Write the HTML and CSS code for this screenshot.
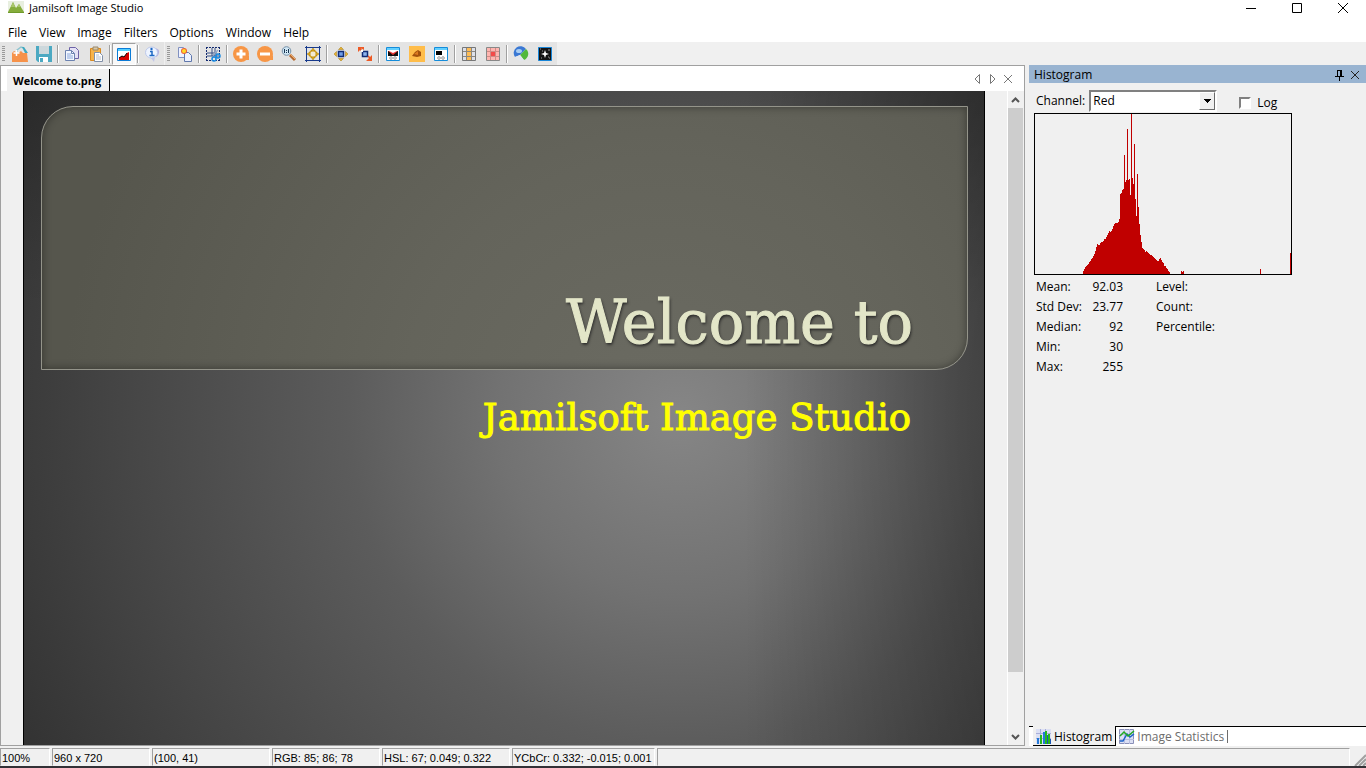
FILE: index.html
```html
<!DOCTYPE html>
<html lang="en">
<head>
<meta charset="utf-8">
<title>Jamilsoft Image Studio</title>
<link rel="stylesheet" href="styles.css">
</head>
<body>
<div class="app">
  <header class="titlebar">
    <svg class="logo" width="16" height="16" viewBox="0 0 16 16"><path d="M0 1h16v12H0z" fill="#e8efe0"/><path d="M0 12 5 2l3 6 3-4 5 8z" fill="#86ad3c"/><path d="M3 7l2-5 2 5zM9 7l2-3 2 3z" fill="#a9c76b"/><path d="M0 12h16v1H0z" fill="#6f9a2c"/></svg>
    <h1 class="app-name">Jamilsoft Image Studio</h1>
    <div class="window-buttons">
      <button aria-label="Minimize"><svg width="12" height="12"><path d="M1 7.500h10" stroke="#000"/></svg></button>
      <button aria-label="Maximize"><svg width="12" height="12"><path d="M1.500 2.500h9v9h-9z" fill="none" stroke="#000"/></svg></button>
      <button aria-label="Close"><svg width="12" height="12"><path d="M1 2l10 10M11 2 1 12" stroke="#000"/></svg></button>
    </div>
  </header>

  <nav class="menubar">
    <button>File</button><button>View</button><button>Image</button><button>Filters</button><button>Options</button><button>Window</button><button>Help</button>
  </nav>

  <div class="toolbars">
    <div class="toolbar">
      <span class="grip"></span>
      <button aria-label="Open"><svg width="16" height="16"><path d="M5 6V4l4-3 3 1" fill="none" stroke="#8cc4d0" stroke-width="1.500"/><path d="M10 1h2l4 6h-3z" fill="#3fa9c0"/><path d="M0 7l2-2 4 2 3-2 2 2h4l1 9H0z" fill="#f6924a"/><path d="M4.500 4v6M1.500 7h6" stroke="#fff" stroke-width="1.500"/></svg></button>
      <button aria-label="Save"><svg width="16" height="16"><path d="M0 0h16v16H2l-2-2z" fill="#4ca9c2"/><path d="M3 0h10v8H3z" fill="#cdd8dc"/><path d="M3 11h9v5H3z" fill="#fff"/><path d="M4 12h3v4H4z" fill="#4ca9c2"/></svg></button>
      <span class="sep"></span>
      <button aria-label="Copy"><svg width="16" height="16"><path d="M5.500 1.500h6l3 3v8h-9z" fill="#e4e1f5" stroke="#6d63a8"/><path d="M1.500 4.500h6l3 3v7h-9z" fill="#f3f7ff" stroke="#6c82b0"/><path d="M3 8h4M3 10h6M3 12h6" stroke="#8ba8dc"/><path d="M7.500 4.500v3h3" fill="none" stroke="#6c82b0"/></svg></button>
      <button aria-label="Paste"><svg width="16" height="16"><path d="M2.500 2.500h10v12h-10z" fill="#f7b34a" stroke="#d98a20"/><path d="M5 1h5v3H5z" fill="#d9c9a8" stroke="#98876a"/><path d="M6.500 6.500h5l3 3v6h-8z" fill="#fff" stroke="#8190a8"/><path d="M8 9h3M8 11h5M8 13h5" stroke="#b5bdcc"/></svg></button>
      <span class="sep"></span>
      <button class="pressed" aria-label="Histogram" aria-pressed="true"><svg width="16" height="16"><path d="M1.500 2.500h13v12h-13z" fill="#fff" stroke="#0c7bd6"/><path d="M2 3h12v2H2z" fill="#55cfff"/><path d="M3 14v-2l3-2 2 1 3-4 2-1v8z" fill="#d80000"/><path d="M3 12l3-2 2 1 3-4" fill="none" stroke="#000"/></svg></button>
      <span class="sep"></span>
      <button aria-label="Information"><svg width="16" height="16"><path d="M11 2q5 1 4 5t-4 4z" fill="#b7b3e0"/><path d="M7 12l3 4 1-5" fill="#c2c7e8"/><ellipse cx="7.500" cy="6.500" rx="6" ry="5.500" fill="#eef4ff" stroke="#bcc8ea"/><path d="M6 5.500h2v4M5.500 9.500h5" fill="none" stroke="#1d68c4" stroke-width="1.500"/><circle cx="7.500" cy="3" r="1.200" fill="#1d68c4"/></svg></button>
    </div>
    <div class="toolbar">
      <span class="grip"></span>
      <button aria-label="Clone"><svg width="16" height="16"><path d="M1.500 1.500h5l3 3v7h-8z" fill="#eef2ff" stroke="#8090c0"/><path d="M7.500 6.500h4l3 3v6h-7z" fill="#eef2ff" stroke="#6078ac"/><circle cx="7" cy="5" r="3" fill="#ee6038"/><circle cx="7" cy="5" r="2" fill="#ffdb28"/></svg></button>
      <span class="sep"></span>
      <button aria-label="Crop"><svg width="16" height="16"><path d="M1 1.500h14M1.500 1v14M1 14.500h14M14.500 1v14" stroke="#132b70" stroke-dasharray="2 1"/><path d="M7 2v8M10 2v8M2 7h10M2 10h12" stroke="#344e86"/><path d="M8 9l5-5" stroke="#97aac5" stroke-width="1.500"/><circle cx="9" cy="13" r="2" fill="none" stroke="#1689e0" stroke-width="1.500"/><circle cx="13" cy="10" r="2" fill="none" stroke="#1689e0" stroke-width="1.500"/></svg></button>
      <span class="sep"></span>
      <button aria-label="Zoom in"><svg width="16" height="16"><circle cx="8" cy="8" r="8" fill="#f79646"/><path d="M11 14h5v-5z" fill="#f79646"/><path d="M8 3.500v9M3.500 8h9" stroke="#fff" stroke-width="3"/></svg></button>
      <button aria-label="Zoom out"><svg width="16" height="16"><circle cx="8" cy="8" r="8" fill="#f79646"/><path d="M11 14h5v-5z" fill="#f79646"/><path d="M3 8h10" stroke="#fff" stroke-width="3"/></svg></button>
      <button aria-label="Actual size"><svg width="16" height="16"><path d="M9 9l5 5" stroke="#b56a32" stroke-width="3"/><path d="M9 8l5 5" stroke="#f0b070"/><circle cx="5.500" cy="5" r="4.300" fill="#cfe6f4" stroke="#7590a8"/><path d="M3.500 3v4M7.500 3v4" stroke="#163450"/><path d="M5 4h1v1H5zM5 6h1v1H5z" fill="#163450"/></svg></button>
      <button aria-label="Fit to window"><svg width="16" height="16"><path d="M1.500 0v16M14.500 0v16M0 1.500h16M0 14.500h16" stroke="#173a8c"/><circle cx="8" cy="8" r="3.500" fill="#f4ead0" stroke="#d9a21a" stroke-width="1.500"/><path d="M8 2l2 3H6zM8 14l2-3H6zM2 8l3-2v4zM14 8l-3-2v4z" fill="#e5ac16" stroke="#9c7812" stroke-width=".5"/></svg></button>
      <span class="sep"></span>
      <button aria-label="Move"><svg width="16" height="16"><path d="M5.500 5.500h5v5h-5z" fill="#6f9ee8" stroke="#102d78" stroke-width="1.500"/><path d="M8 1l2.500 2.500h-5zM8 15l2.500-2.500h-5zM1 8l2.500-2.500v5zM15 8l-2.500-2.500v5z" fill="#e9b22b" stroke="#a27a18" stroke-width=".5"/></svg></button>
      <button aria-label="Resize"><svg width="16" height="16"><path d="M5.500 5.500h5v5h-5z" fill="#8eb5ed" stroke="#102d78" stroke-width="1.500"/><path d="M2 2l3 3M11 10l3 3" stroke="#e94f1e" stroke-width="1.500"/><path d="M1 6V1h5zM2 1h5v3zM15 9v6H9zM12 12h3v3z" fill="#ee5a25"/><path d="M4 4h2v2H4z" fill="#fff"/></svg></button>
      <span class="sep"></span>
      <button aria-label="Levels"><svg width="16" height="16"><path d="M1.500 1.500h13v13h-13z" fill="#fff" stroke="#158cda"/><path d="M2 2h12v2H2z" fill="#63d0ff"/><path d="M3 5h10v5H3z" fill="#101010"/><path d="M3 5l5 4 5-4z" fill="#e33"/><path d="M4 5l4 2 4-2z" fill="#fff"/><circle cx="6" cy="12" r="1.300" fill="none" stroke="#999"/><circle cx="10" cy="12" r="1.300" fill="none" stroke="#999"/></svg></button>
      <button aria-label="Rotate hue"><svg width="16" height="16"><path d="M0 0h16v16H0z" fill="#ffbd4a"/><path d="M3 10l3-4 3-2 3 2v4l-4 1z" fill="#a3510c"/><path d="M5 8l4-3v4z" fill="#dd7b21"/></svg></button>
      <button aria-label="Contrast"><svg width="16" height="16"><path d="M1.500 1.500h13v13h-13z" fill="#fff" stroke="#158cda"/><path d="M2 2h12v2H2z" fill="#63d0ff"/><path d="M3 5h6v4H3z" fill="#000"/><circle cx="6" cy="12" r="1.300" fill="none" stroke="#999"/><circle cx="10" cy="12" r="1.300" fill="none" stroke="#999"/></svg></button>
      <span class="sep"></span>
      <button aria-label="Convolution"><svg width="16" height="16"><path d="M1.500 1.500h13v13h-13z" fill="#dce0ea" stroke="#777"/><path d="M6 2h4v12H6z" fill="#ffbd55"/><path d="M5.500 2v12M10.500 2v12M2 5.500h12M2 10.500h12" stroke="#8d877d"/></svg></button>
      <button aria-label="Morphology"><svg width="16" height="16"><path d="M1.500 1.500h13v13h-13z" fill="#ffb5b0" stroke="#888"/><path d="M6 6h4v4H6z" fill="#f44a48"/><path d="M5.500 2v12M10.500 2v12M2 5.500h12M2 10.500h12" stroke="#cf8c87"/></svg></button>
      <span class="sep"></span>
      <button aria-label="Color filtering"><svg width="16" height="16"><circle cx="8" cy="8" r="6.500" fill="#dfe6f2"/><path d="M2 11A6.500 6.500 0 0 1 13 3L7 9z" fill="#3a78d4"/><path d="M7 9l6-6a6.500 6.500 0 0 1-2 11z" fill="#52b83a"/><path d="M7 9l-5 2a6.500 6.500 0 0 0 9 3z" fill="#e3e6ec"/><ellipse cx="6" cy="5" rx="3" ry="2" fill="#a9cdf2"/></svg></button>
      <button aria-label="Fourier"><svg width="16" height="16"><path d="M1.500 1.500h13v13h-13z" fill="#151515" stroke="#1785d8"/><path d="M8 4l1 3 3 1-3 1-1 3-1-3-3-1 3-1z" fill="#fff"/><path d="M3 3h1M11 4h2M4 12h1M12 12h1M5 5h1M11 11h1" stroke="#999"/></svg></button>
    </div>
  </div>

  <main class="workspace">
    <section class="document">
      <div class="doc-tabs">
        <button class="doc-tab">Welcome to.png</button>
        <div class="doc-tools">
          <button aria-label="Previous tab"><svg width="15" height="12"><path d="M9.500 1.500v9L5 6z" fill="none" stroke="#777"/></svg></button>
          <button aria-label="Next tab"><svg width="15" height="12"><path d="M5.500 1.500v9L10 6z" fill="none" stroke="#777"/></svg></button>
          <button aria-label="Close tab"><svg width="15" height="12"><path d="M4 2l8 8M12 2l-8 8" stroke="#777"/></svg></button>
        </div>
      </div>
      <div class="doc-body">
        <div class="canvas">
          <article class="slide">
            <div class="slide-card"><h2>Welcome to</h2></div>
            <p class="slide-subtitle">Jamilsoft Image Studio</p>
          </article>
        </div>
        <div class="scrollbar">
          <button aria-label="Scroll up"><svg width="15" height="16"><path d="M4 10l3.500-3.500L11 10" fill="none" stroke="#555" stroke-width="2"/></svg></button>
          <div class="track"><div class="thumb"></div></div>
          <button aria-label="Scroll down"><svg width="15" height="16"><path d="M4 6l3.500 3.500L11 6" fill="none" stroke="#555" stroke-width="2"/></svg></button>
        </div>
      </div>
    </section>

    <aside class="panel">
      <div class="panel-title">
        <h2>Histogram</h2>
        <button aria-label="Auto hide"><svg width="16" height="12"><path d="M6 1h5v6H6zM4 7h9v1H4zM8 8h1v4H8z" fill="#000"/><path d="M7 2h2v5H7z" fill="#99b4d1"/></svg></button>
        <button aria-label="Close panel"><svg width="16" height="12"><path d="M4 2l8 8M12 2l-8 8" stroke="#222"/></svg></button>
      </div>
      <div class="panel-body">
        <div class="channel-row">
          <label for="channel">Channel:</label>
          <span class="select-box">
            <select id="channel"><option>Red</option><option>Green</option><option>Blue</option></select>
            <span class="select-arrow"><svg width="7" height="4" shape-rendering="crispEdges"><path d="M0 0h7L3.500 4z" fill="#000"/></svg></span>
          </span>
          <label class="log"><input type="checkbox"><span>Log</span></label>
        </div>
        <svg class="histogram" width="256" height="160" viewBox="0 0 256 160" shape-rendering="crispEdges" role="img" aria-label="Red channel histogram"><path fill="#c00000" d="M48 160V157h1V155h1V153h1V152h1V151h1V150h1V148h1V147h1V145h1V144h1V142h1V140h1V137h1V133h1V130h1V131h2V129h1V128h2V127h1V125h2V123h1V121h1V119h1V117h1V118h1V117h1V115h1V112h1V110h1V109h3V108h1V105h1V80h1V79h1V76h1V75h1V41h1V68h1V66h1V15h1V66h1V65h1V81h1V0h1V64h1V70h1V30h1V85h1V102h1V60h1V93h1V110h1V121h1V128h1V134h1V135h1V136h1V138h1V137h1V138h1V139h1V140h1V141h2V142h1V143h1V144h1V145h1V146h1V147h2V145h1V144h1V146h1V148h1V149h1V152h2V154h1V155h1V157h1V158h1V160zM146 160v-3h1v1h1v-1h1v3zM225 160v-5h1v5zM255 160v-21h1v21z"/></svg>
        <div class="stats">
          <dl class="stats-values">
            <dt>Mean:</dt><dd>92.03</dd>
            <dt>Std Dev:</dt><dd>23.77</dd>
            <dt>Median:</dt><dd>92</dd>
            <dt>Min:</dt><dd>30</dd>
            <dt>Max:</dt><dd>255</dd>
          </dl>
          <dl class="stats-cursor">
            <dt>Level:</dt><dt>Count:</dt><dt>Percentile:</dt>
          </dl>
        </div>
      </div>
      <div class="panel-tabs">
        <button class="panel-tab active"><svg width="16" height="16"><path d="M0 0h15v15H0z" fill="#dce0f4"/><path d="M0 4.500h15M0 9.500h15M4.500 0v15M9.500 0v15" stroke="#a9aed8"/><path d="M1 9h2v6H1zM7 3h2v12H7z" fill="#2379d8"/><path d="M4 6h2v9H4zM9 2h2v13H9zM12 5h2v10h-2z" fill="#25b91d"/><path d="M14 10h1v5h-1zM11 6h1v9h-1z" fill="#1857b5"/></svg>Histogram</button>
        <button class="panel-tab"><svg width="16" height="16"><path d="M.5.500h14v14H.5z" fill="#dce0f4" stroke="#8a90b8"/><path d="M0 5.500h15M0 10.500h15M5.500 0v15M10.500 0v15" stroke="#b9bee0"/><path d="M1 12h3l4-7 3 3 4-3" fill="none" stroke="#1c62c9" stroke-width="1.500"/><path d="M1 7l4-4 4 4 6-5" fill="none" stroke="#22aa22" stroke-width="1.500"/></svg>Image Statistics</button>
        <span class="tab-end"></span>
      </div>
    </aside>
  </main>

  <footer class="statusbar">
    <span class="cell zoom">100%</span>
    <span class="cell size">960 x 720</span>
    <span class="cell position">(100, 41)</span>
    <span class="cell rgb">RGB: 85; 86; 78</span>
    <span class="cell hsl">HSL: 67; 0.049; 0.322</span>
    <span class="cell ycbcr">YCbCr: 0.332; -0.015; 0.001</span>
    <span class="cell rest"></span>
    <svg class="size-grip" width="16" height="18"><path d="M5 18 16 7M9 18l7-7M13 18l3-3" stroke="#a0a0a0" stroke-width="2"/></svg>
  </footer>
</div>
</body>
</html>
```
FILE: styles.css
```css
* { box-sizing: border-box; }

body {
  margin: 0;
  background: #f0f0f0;
  color: #000;
  font: 12px/16px "Open Sans", "Noto Sans", sans-serif;
}

h1, h2, p, dl, dd { margin: 0; font-weight: normal; }

button {
  display: flex;
  align-items: center;
  justify-content: center;
  padding: 0;
  border: 0;
  background: none;
  color: inherit;
  font: inherit;
}

svg { display: block; flex: none; }

.app {
  display: flex;
  flex-direction: column;
  height: 100vh;
  border-bottom: 2px solid #333136;
}

.titlebar {
  display: flex;
  align-items: flex-start;
  height: 23px;
  padding-left: 8px;
  background: #fff;
}
.app-name { margin-left: 5px; font-size: 11px; line-height: 16px; }
.window-buttons { display: flex; margin-left: auto; }
.window-buttons button { width: 46px; height: 14px; }

.menubar { display: flex; height: 19px; padding-left: 2px; background: #fff; }
.menubar button { padding: 0 6px; height: 19px; }

.toolbars {
  display: flex;
  gap: 1px;
  height: 23px;
}
.toolbar {
  display: flex;
  align-items: center;
  padding-left: 2px;
  background: #e4e4e4;
}
.toolbar button { width: 24px; height: 22px; }
.toolbar .pressed {
  background: #f8f8f8;
  border: 1px solid #a0a0a0;
  border-right-color: #fff;
  border-bottom-color: #fff;
}
.grip {
  width: 3px;
  height: 16px;
  margin-right: 3px;
  background: repeating-linear-gradient(#999 0 1px, #e4e4e4 1px 2px);
}
.sep {
  width: 2px;
  height: 18px;
  margin: 0 1px;
  border-left: 1px solid #a0a0a0;
  border-right: 1px solid #fff;
}

.workspace { display: flex; flex: 1; min-height: 0; gap: 4px; }

.document {
  display: flex;
  flex: 1;
  flex-direction: column;
  min-width: 0;
  border: 1px solid #a0a0a0;
}
.doc-tabs {
  display: flex;
  justify-content: space-between;
  height: 25px;
  padding: 3px 9px 0 6px;
  background: #fff;
}
.doc-tab {
  padding: 2px 8px 0 6px;
  border-right: 1px solid #000;
  background: #f0f0f0;
  font-size: 11px;
  font-weight: bold;
}
.doc-tools { display: flex; padding-bottom: 3px; }
.doc-body { display: flex; flex: 1; min-height: 0; }
.canvas { display: flex; flex: 1; justify-content: center; overflow: hidden; }

.slide {
  width: 962px;
  height: 722px;
  flex: none;
  padding: 15px 16px 0 17px;
  border: 1px solid #000;
  border-top: 0;
  background:
    linear-gradient(90deg, transparent 75%, rgba(0, 0, 0, .3)),
    linear-gradient(0deg, transparent 70%, rgba(0, 0, 0, .2)),
    radial-gradient(circle at 655px 325px, #868686 0, #727272 180px, #5c5c5c 330px, #474747 540px, #303030 760px);
}
.slide-card {
  display: flex;
  align-items: flex-end;
  justify-content: flex-end;
  height: 264px;
  padding: 0 54px 10px 0;
  border: 1px solid #94948a;
  border-radius: 32px 0 32px 0;
  background: radial-gradient(circle at 620px 310px, #6b6b62 0, #64645b 260px, #56564d 600px);
  box-shadow: inset 0 0 8px rgba(0, 0, 0, .4);
}
.slide h2 {
  color: #e3e6c8;
  font: 59px/72px "DejaVu Serif", serif;
  text-shadow: 1px 2px 3px #222;
  -webkit-text-stroke: 1px #e3e6c8;
}
.slide-subtitle {
  padding: 22px 57px 0 0;
  color: #ff0;
  font: 37px/52px "DejaVu Serif", serif;
  text-align: right;
  -webkit-text-stroke: 1px #ff0;
}

.scrollbar {
  display: flex;
  flex-direction: column;
  width: 17px;
  padding-right: 1px;
  border-left: 1px solid #fff;
}
.scrollbar button { height: 17px; }
.track { flex: 1; }
.thumb { height: 91%; background: #cdcdcd; }

.panel { display: flex; flex-direction: column; width: 337px; }
.panel-title {
  display: flex;
  align-items: center;
  height: 18px;
  padding: 2px 3px 0 5px;
  background: #99b4d1;
}
.panel-title h2 { margin-right: auto; font-size: 12px; }
.panel-body { flex: 1; padding: 6px 5px; }

.channel-row { display: flex; align-items: center; height: 24px; padding-left: 2px; }
.select-box { position: relative; width: 128px; margin: 0 22px 0 4px; }
.select-box select {
  display: block;
  width: 100%;
  height: 22px;
  padding: 0 2px;
  appearance: none;
  border: 2px solid;
  border-color: #808080 #fff #fff #808080;
  border-radius: 0;
  background: #fff;
  color: #000;
  font: inherit;
}
.select-arrow {
  position: absolute;
  top: 2px;
  right: 2px;
  bottom: 2px;
  display: flex;
  align-items: center;
  justify-content: center;
  width: 16px;
  border: 1px solid;
  border-color: #fff #696969 #696969 #fff;
  background: #f0f0f0;
  pointer-events: none;
}
.log { display: flex; align-items: center; gap: 6px; padding-top: 4px; }
.log input {
  width: 12px;
  height: 12px;
  margin: 0;
  appearance: none;
  border: 2px solid;
  border-color: #808080 #fff #fff #808080;
  background: #fff;
}
.histogram { box-sizing: content-box; border: 1px solid #000; }

.stats { display: flex; gap: 33px; padding: 2px; line-height: 20px; }
.stats-values { display: grid; grid-template-columns: 50px 37px; }
.stats-values dd { text-align: right; }

.panel-tabs { display: flex; height: 20px; background: #fff; }
.panel-tabs::before { content: ""; width: 4px; border-top: 1px solid #000; }
.panel-tab {
  gap: 2px;
  padding: 1px 3px 0 3px;
  border-top: 1px solid #000;
  color: #6d6d6d;
}
.panel-tab.active {
  padding-top: 2px;
  border-top: 0;
  border-right: 1px solid #000;
  border-bottom: 1px solid #000;
  background: #f0f0f0;
  color: #000;
}
.tab-end { flex: 1; padding: 3px 0; border-top: 1px solid #000; }
.tab-end::before { content: ""; display: block; height: 13px; border-left: 1px solid #6d6d6d; }

.statusbar { display: flex; gap: 2px; height: 20px; padding-top: 2px; font: 11px/18px "Liberation Sans", Arial, sans-serif; }
.cell {
  padding-left: 1px;
  border: 1px solid;
  border-color: #a0a0a0 #fff #f0f0f0 #a0a0a0;
  white-space: nowrap;
}
.zoom { width: 50px; }
.size { width: 98px; }
.position { width: 118px; }
.rgb { width: 108px; }
.hsl { width: 128px; }
.ycbcr { width: 143px; }
.rest { flex: 1; }
.size-grip { margin-left: -2px; }
```
